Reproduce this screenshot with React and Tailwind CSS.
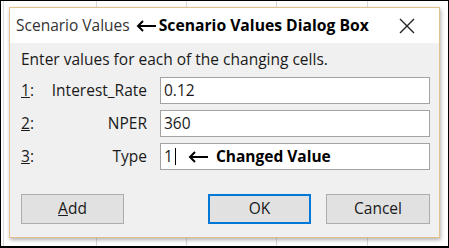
import React from 'react';

const FONT = { fontFamily: '"Open Sans", "Noto Sans", sans-serif' };

function ArrowLeft() {
  return (
    <svg width="21" height="12" viewBox="0 0 21 12" className="shrink-0">
      <path d="M2 6 H20" stroke="#000" strokeWidth="2" />
      <path d="M7 1 L2 6 L7 11" stroke="#000" strokeWidth="2" fill="none" />
    </svg>
  );
}

function CloseIcon() {
  return (
    <svg width="16" height="16" viewBox="0 0 16 16">
      <path d="M1 1 L15 15 M15 1 L1 15" stroke="#222" strokeWidth="1.4" />
    </svg>
  );
}

const rows = [
  { n: '1', label: 'Interest_Rate', value: '0.12' },
  { n: '2', label: 'NPER', value: '360' },
  { n: '3', label: 'Type', value: '1', changed: true },
];

export default function App() {
  return (
    <div
      className="relative h-[248px] w-[449px] overflow-hidden border border-b-2 border-black bg-white"
      style={FONT}
    >
      {/* sheet gridlines behind the dialog */}
      <div className="absolute inset-0 bg-[linear-gradient(90deg,transparent_2px,#d9d9d9_2px,#d9d9d9_3px,transparent_3px),linear-gradient(90deg,transparent_95px,#d9d9d9_95px,#d9d9d9_96px,transparent_96px),linear-gradient(90deg,transparent_185px,#d9d9d9_185px,#d9d9d9_186px,transparent_186px),linear-gradient(90deg,transparent_275px,#d9d9d9_275px,#d9d9d9_276px,transparent_276px),linear-gradient(90deg,transparent_366px,#d9d9d9_366px,#d9d9d9_367px,transparent_367px)]" />

      <div className="relative ml-[8px] mt-[6px] flex h-[231px] w-[431px] flex-col border border-[#e4c08e] bg-[#f0f0f0] shadow-[1px_2px_4px_rgba(0,0,0,0.3)]">
        <div className="flex h-[35px] items-center bg-white pl-[6px] pr-[24px]">
          <span className="text-[15.5px] text-[#333]">Scenario Values</span>
          <span className="ml-[6px] mr-[2px] flex items-center">
            <ArrowLeft />
          </span>
          <span className="text-[15.7px] font-bold text-black">Scenario Values Dialog Box</span>
          <span className="ml-auto flex items-center">
            <CloseIcon />
          </span>
        </div>

        <div className="flex flex-1 flex-col pl-[11px] pr-[9px] pt-[6px] text-[15.5px] text-[#1a1a1a]">
          <p className="leading-[20px]">Enter values for each of the changing cells.</p>

          <div className="mt-[8px] flex flex-col gap-[6px]">
            {rows.map((row) => (
              <div key={row.n} className="flex h-[27px] items-center">
                <span className="w-[30px]">
                  <span className="underline">{row.n}</span>:
                </span>
                <span className="w-[96px] text-right">{row.label}</span>
                <div className="ml-[13px] flex h-full flex-1 items-center border border-[#a3a3a3] bg-white pl-[3px]">
                  <span>{row.value}</span>
                  {row.changed && (
                    <>
                      <span className="ml-[2px] h-[17px] w-[1px] bg-black" />
                      <span className="ml-[12px] flex items-center">
                        <ArrowLeft />
                      </span>
                      <span className="ml-[7px] text-[15.5px] font-bold text-black">Changed Value</span>
                    </>
                  )}
                </div>
              </div>
            ))}
          </div>

          <div className="mt-[24px] flex items-center">
            <button className="h-[30px] w-[103px] border border-[#adadad] bg-[#e1e1e1] text-[15.5px]">
              <span className="underline">A</span>dd
            </button>
            <button className="ml-auto h-[30px] w-[103px] border-2 border-[#0078d7] bg-[#e1e1e1] text-[15.5px]">
              OK
            </button>
            <button className="ml-[15px] h-[30px] w-[104px] border border-[#adadad] bg-[#e1e1e1] text-[15.5px]">
              Cancel
            </button>
          </div>
        </div>
      </div>
    </div>
  );
}
